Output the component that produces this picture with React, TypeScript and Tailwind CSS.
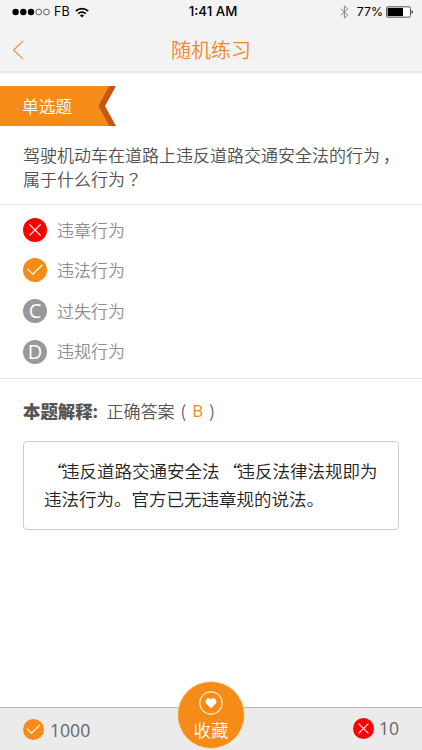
type OptionState = "wrong" | "right" | "idle";

interface Option {
  letter: string;
  label: string;
  state: OptionState;
}

const OPTIONS: Option[] = [
  { letter: "A", label: "违章行为", state: "wrong" },
  { letter: "B", label: "违法行为", state: "right" },
  { letter: "C", label: "过失行为", state: "idle" },
  { letter: "D", label: "违规行为", state: "idle" },
];

function CrossIcon({ className }: { className: string }) {
  return (
    <svg viewBox="0 0 24 24" className={className}>
      <circle cx="12" cy="12" r="12" fill="#fe0000" />
      <path d="M6.4 6.4l11.2 11.2M17.6 6.4L6.4 17.6" stroke="#fff" strokeWidth="1.3" fill="none" />
    </svg>
  );
}

function CheckIcon({ className }: { className: string }) {
  return (
    <svg viewBox="0 0 24 24" className={className}>
      <circle cx="12" cy="12" r="12" fill="#f68b17" />
      <path d="M4.4 10.9l5.4 5.3L19.4 6.7" stroke="#fff" strokeWidth="1.3" fill="none" />
    </svg>
  );
}

function StatusBar() {
  return (
    <div className="flex h-6 items-center justify-between pl-3 pr-2 font-['Inter',sans-serif] text-xs font-normal text-black">
      <div className="flex w-[120px] items-center">
        <svg viewBox="0 0 38 8" className="h-2 w-[38px]">
          <circle cx="3.6" cy="4" r="3.2" />
          <circle cx="11.3" cy="4" r="3.2" />
          <circle cx="19" cy="4" r="3.2" />
          <circle cx="26.7" cy="4" r="2.9" fill="none" stroke="#222" strokeWidth="0.7" />
          <circle cx="34.4" cy="4" r="2.9" fill="none" stroke="#222" strokeWidth="0.7" />
        </svg>
        <span className="ml-1 text-[12.5px]">FB</span>
        <svg viewBox="0 0 14 11" className="ml-[5px] h-[11px] w-[14px]" fill="none" stroke="#000" strokeWidth="1.7">
          <path d="M0.8 4.1a8.8 8.8 0 0 1 12.4 0" />
          <path d="M3.2 6.6a5.4 5.4 0 0 1 7.6 0" />
          <path d="M7 10.6L5 8.4a2.8 2.8 0 0 1 4 0z" fill="#000" stroke="none" />
        </svg>
      </div>
      <span className="text-[13.3px] font-medium">1:41 AM</span>
      <div className="flex w-[120px] items-center justify-end">
        <svg viewBox="0 0 9 14" className="mr-2 h-[14px] w-[9px]" fill="none" stroke="#888" strokeWidth="1">
          <path d="M0.8 3.8l7 6.2-3.4 3V1l3.4 3-7 6.2" />
        </svg>
        <span className="text-[12.3px]">77%</span>
        <svg viewBox="0 0 28 12" className="ml-[3px] h-3 w-[28px]">
          <rect x="0.5" y="0.8" width="24" height="10.4" rx="1.5" fill="#fff" stroke="#444" strokeWidth="0.9" />
          <rect x="1.6" y="1.9" width="15.4" height="8.2" />
          <path d="M25.6 4.2c1.7 0.3 1.7 3.3 0 3.6z" fill="#222" />
        </svg>
      </div>
    </div>
  );
}

function OptionRow({ option }: { option: Option }) {
  return (
    <li className="flex h-[40.6px] items-center">
      {option.state === "wrong" && <CrossIcon className="h-6 w-6" />}
      {option.state === "right" && <CheckIcon className="mb-[2px] h-6 w-6" />}
      {option.state === "idle" && (
        <span className="flex h-6 w-6 items-center justify-center rounded-full bg-[#999] font-['Open_Sans',sans-serif] text-xl font-normal leading-6 text-white">
          {option.letter}
        </span>
      )}
      <span className="mb-[2px] ml-[10px] text-[17px] text-[#8e8e8e]">{option.label}</span>
    </li>
  );
}

export default function App() {
  return (
    <div className="flex h-[750px] w-[422px] flex-col overflow-hidden bg-white font-['Noto_Sans_CJK_SC',sans-serif] font-[350]">
      <header className="h-[73px] shrink-0 border-b-2 border-[#e9e9e9] bg-[#f3f3f3]">
        <StatusBar />
        <div className="flex h-[52px] items-center justify-between px-3">
          <svg viewBox="0 0 12 20" className="h-5 w-3" fill="none" stroke="#f08a30" strokeWidth="1.1">
            <path d="M11.2 0.8L1.5 10l9.7 9.2" />
          </svg>
          <h1 className="text-xl leading-none text-[#f0862a]">随机练习</h1>
          <span className="w-3" />
        </div>
      </header>

      {/* Question */}
      <section className="h-[132px] shrink-0 border-b border-[#e6e6e6] pt-[13px]">
        <div className="relative flex h-10 w-[116px] items-center pl-[22px]">
          <svg viewBox="0 0 116 40" className="absolute inset-0 h-10 w-[116px]">
            <path d="M0 0H109L98 20l11 20H0z" fill="#f68b17" />
            <path d="M109 0h7l-11 20 11 20h-7L98 20z" fill="#c9560f" />
          </svg>
          <span className="relative pt-[2px] text-[16.7px] text-white">单选题</span>
        </div>
        <p className="ml-[23px] mt-[17px] w-[385px] text-[17px] leading-6 text-[#505050]">
          驾驶机动车在道路上违反道路交通安全法的行为
          <span className="pl-[3px]">，</span>
          <br />
          属于什么行为
          <span lang="zh-TW" className="font-['Noto_Sans_CJK_TC',sans-serif]">？</span>
        </p>
      </section>

      {/* Options */}
      <ul className="h-[174px] shrink-0 border-b border-[#e6e6e6] pl-[23px] pt-[5px]">
        {OPTIONS.map((option) => (
          <OptionRow key={option.letter} option={option} />
        ))}
      </ul>

      {/* Explanation */}
      <section className="flex-1 px-[23px] pt-5">
        <p className="flex h-6 items-center text-[17px] text-[#555]">
          <b className="text-[17.4px] font-black">本题解释</b>
          <span className="w-[14px] font-bold">:</span>
          <span>正确答案</span>
          <span className="ml-[6px]">(</span>
          <span className="mx-[6px] font-['Open_Sans',sans-serif] font-normal text-[#f68b17]">B</span>
          <span>)</span>
        </p>
        <div className="mt-[18px] h-[89px] w-[376px] rounded-[4px] border border-[#ccc] pl-5 pt-[15px] text-[17.5px] leading-7 text-[#222]">
          <p>
            <span className="inline-block w-[18px] text-right italic">“</span>违反道路交通安全法
            <span className="inline-block w-[18px] text-right italic">“</span>违反法律法规即为
          </p>
          <p>违法行为。官方已无违章规的说法。</p>
        </div>
      </section>

      <footer className="relative flex h-[43px] shrink-0 items-center justify-between border-t border-[#b8b8b8] bg-[#ebebeb] px-[23px] font-['Open_Sans',sans-serif] text-lg font-normal text-[#666]">
        <div className="flex items-center gap-[6px]">
          <CheckIcon className="h-[21px] w-[21px]" />
          <span className="pt-[2px] text-[17.6px] leading-6">1000</span>
        </div>
        <div className="flex items-center gap-[5px]">
          <CrossIcon className="h-[21px] w-[21px]" />
          <span className="text-[17.6px]">10</span>
        </div>
        <button className="absolute left-[177px] top-[-27px] flex h-[68px] w-[68px] flex-col items-center rounded-full border border-[#fde3bd] bg-[#f68b17] pt-[9px] font-['Noto_Sans_CJK_SC',sans-serif] font-[350] text-white">
          <svg viewBox="0 0 24 24" className="h-6 w-6">
            <circle cx="12" cy="12" r="11.2" fill="none" stroke="#ffedc8" strokeWidth="1.2" />
            <path d="M12 17.6L7.2 12.6C4.8 9.4 9.4 5 12 8.6c2.6-3.6 7.2 0.8 4.8 4z" fill="#fff" />
          </svg>
          <span className="mt-[5px] text-[17.5px] leading-5">收藏</span>
        </button>
      </footer>
    </div>
  );
}
